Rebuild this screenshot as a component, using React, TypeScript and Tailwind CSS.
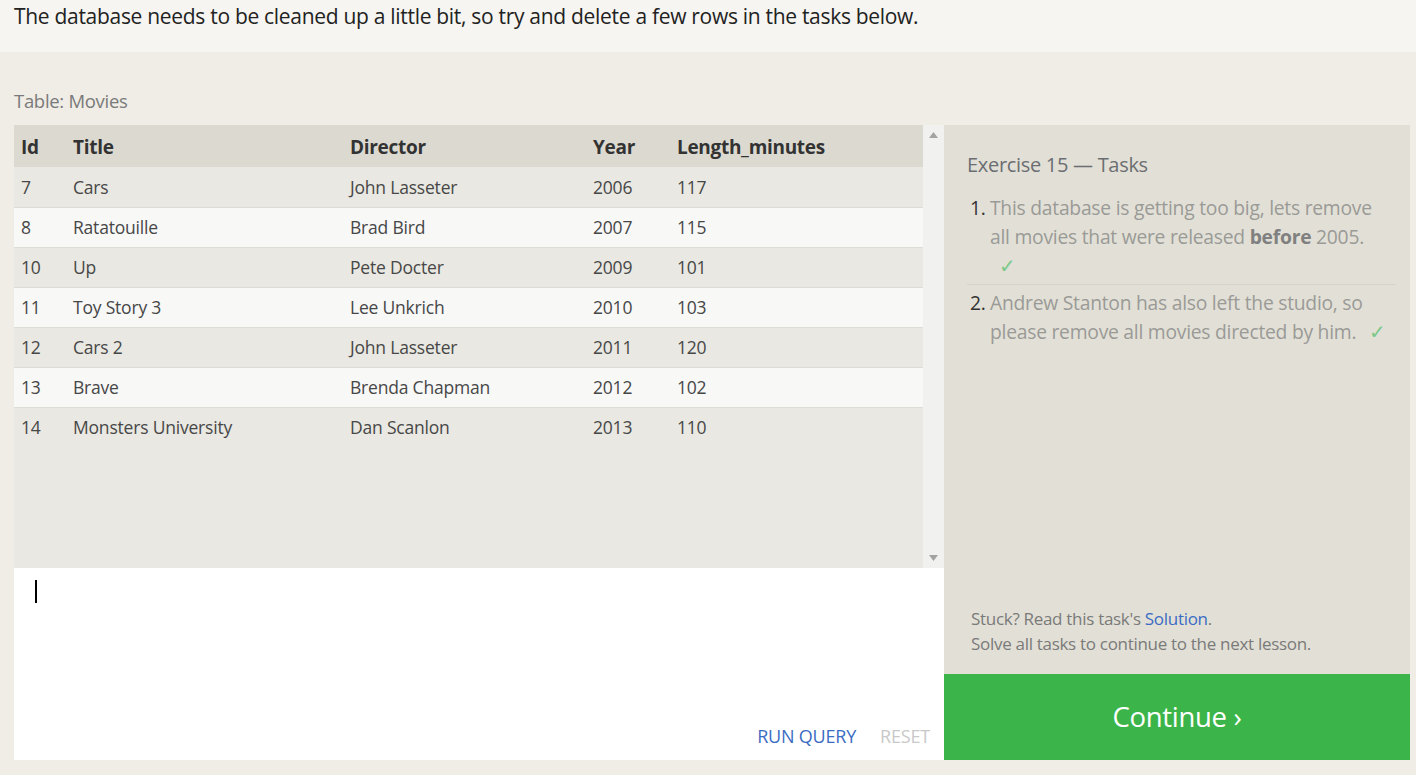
import React from "react";

// Rows left in the Movies table after the deletes
interface Movie {
  id: number;
  title: string;
  director: string;
  year: number;
  length: number;
}

const MOVIES: Array<Movie> = [
  { id: 7, title: "Cars", director: "John Lasseter", year: 2006, length: 117 },
  { id: 8, title: "Ratatouille", director: "Brad Bird", year: 2007, length: 115 },
  { id: 10, title: "Up", director: "Pete Docter", year: 2009, length: 101 },
  { id: 11, title: "Toy Story 3", director: "Lee Unkrich", year: 2010, length: 103 },
  { id: 12, title: "Cars 2", director: "John Lasseter", year: 2011, length: 120 },
  { id: 13, title: "Brave", director: "Brenda Chapman", year: 2012, length: 102 },
  { id: 14, title: "Monsters University", director: "Dan Scanlon", year: 2013, length: 110 },
];

const COLS = "grid grid-cols-[52px_277px_243px_84px_1fr]";

export default function App() {
  return (
    <div className="w-[1416px] h-[775px] overflow-hidden bg-[#efede6] font-['Open_Sans',sans-serif]">
      {/* Intro text */}
      <div className="h-[52px] bg-[#f6f5f1] px-[14px] pt-[1px]">
        <p className="text-[21px] leading-[30px] text-[#222] tracking-[-0.3px] whitespace-nowrap">
          The database needs to be cleaned up a little bit, so try and delete a few rows in the tasks below.
        </p>
      </div>

      <div className="pl-[14px] pr-[6px] pt-[36px]">
        <p className="text-[18.5px] leading-[26px] text-[#7a7a7a] tracking-[-0.3px]">Table: Movies</p>

        <div className="mt-[11px] flex">
          {/* Left: table + editor */}
          <div className="w-[930px] shrink-0 flex flex-col">
            <div className="h-[443px] flex bg-[#e9e8e2]">
              <div className="flex-1">
                <div className={`${COLS} h-[42px] items-center bg-[#dcdad0] pl-[7px] pt-[2px] text-[19px] font-bold text-[#333] tracking-[-0.3px]`}>
                  <span>Id</span>
                  <span>Title</span>
                  <span>Director</span>
                  <span>Year</span>
                  <span>Length_minutes</span>
                </div>
                {MOVIES.map((m, idx) => (
                  <div
                    key={m.id}
                    className={`${COLS} h-[40px] items-center pl-[7px] text-[17.5px] text-[#474747] tracking-[-0.2px] ${
                      idx % 2 === 0 ? "bg-[#e9e8e2]" : "bg-[#f8f8f7]"
                    } ${idx > 0 ? "border-t border-[#dedcd6]" : ""}`}
                  >
                    <span>{m.id}</span>
                    <span>{m.title}</span>
                    <span>{m.director}</span>
                    <span>{m.year}</span>
                    <span>{m.length}</span>
                  </div>
                ))}
              </div>
              {/* Scrollbar */}
              <div className="w-[21px] bg-[#f1f1f0] flex flex-col items-center justify-between py-[7px]">
                <svg width="9" height="6" viewBox="0 0 9 6">
                  <polygon points="4.5,0 9,6 0,6" fill="#a3a3a3" />
                </svg>
                <svg width="9" height="6" viewBox="0 0 9 6">
                  <polygon points="0,0 9,0 4.5,6" fill="#a3a3a3" />
                </svg>
              </div>
            </div>

            {/* Query editor */}
            <div className="h-[192px] bg-white flex flex-col justify-between">
              <div className="pl-[21px] pt-[12px]">
                <div className="w-[2px] h-[23px] bg-black" />
              </div>
              <div className="flex justify-end items-center gap-[24px] pr-[14px] pb-[10px] text-[18px] tracking-[-0.2px]">
                <span className="text-[#3b6cc4]">RUN QUERY</span>
                <span className="text-[#c9c9c9]">RESET</span>
              </div>
            </div>
          </div>

          {/* Right: tasks */}
          <div className="w-[466px] shrink-0 flex flex-col">
            <div className="flex-1 bg-[#e2e0d6] pl-[23px] pr-[14px] pt-[25px] flex flex-col">
              <h3 className="text-[20px] leading-[30px] text-[#6b6e72] tracking-[-0.3px]">Exercise 15 — Tasks</h3>
              <ol className="mt-[13px] text-[19.3px] leading-[29px] text-[#9a9a96] tracking-[-0.25px]">
                <li className="flex pb-[4px] border-b border-[#d5d3ca]">
                  <span className="w-[23px] text-[#333] pl-[3px]">1.</span>
                  <span className="flex-1">
                    This database is getting too big, lets remove
                    <br />
                    all movies that were released <b className="text-[#808080]">before</b> 2005.
                    <br />
                    <span className="pl-[9px] text-[20px] text-[#7dc98a]">✓</span>
                  </span>
                </li>
                <li className="flex pt-[3px]">
                  <span className="w-[23px] text-[#333] pl-[3px]">2.</span>
                  <span className="flex-1">
                    Andrew Stanton has also left the studio, so
                    <br />
                    please remove all movies directed by him.
                    <span className="pl-[13px] text-[20px] text-[#7dc98a]">✓</span>
                  </span>
                </li>
              </ol>
              <div className="mt-auto pb-[18px] pl-[4px] text-[17px] leading-[25px] text-[#7a7a7a] tracking-[-0.3px]">
                <p>
                  Stuck? Read this task's <span className="text-[#3b6cc4]">Solution</span>.
                </p>
                <p>Solve all tasks to continue to the next lesson.</p>
              </div>
            </div>
            <div className="h-[86px] bg-[#3bb54a] flex items-center justify-center text-white text-[27.5px] tracking-[-0.3px]">
              Continue ›
            </div>
          </div>
        </div>
      </div>
    </div>
  );
}
